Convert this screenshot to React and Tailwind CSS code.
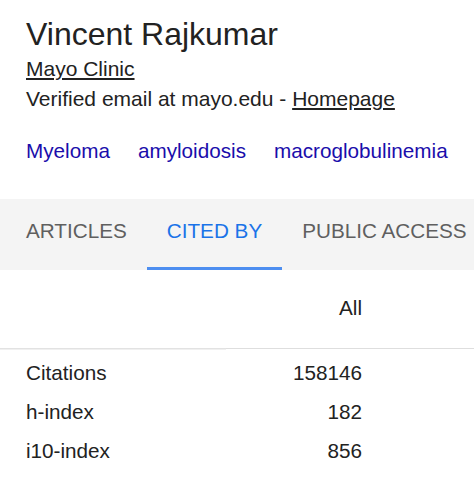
import React from 'react';

const keywords = ['Myeloma', 'amyloidosis', 'macroglobulinemia'];
const tabs = ['ARTICLES', 'CITED BY', 'PUBLIC ACCESS'];
const stats = [
    { label: 'Citations', value: '158146' },
    { label: 'h-index', value: '182' },
    { label: 'i10-index', value: '856' },
];

const App = () => {
    return (
        <div className="w-[474px] h-[500px] overflow-hidden bg-white text-[#222] font-['Liberation_Sans',Arial,sans-serif]">
            <div className="px-[26px] pt-[14px]">
                <h1 className="text-[32px] leading-[40px] font-normal">Vincent Rajkumar</h1>
                <div className="text-[21px] leading-[30px]">
                    <a href="#" className="underline">Mayo Clinic</a>
                </div>
                <div className="text-[21px] leading-[30px]">
                    Verified email at mayo.edu - <a href="#" className="underline">Homepage</a>
                </div>
                <div className="mt-[22px] flex text-[20.7px] leading-[30px] text-[#1a0dab] whitespace-nowrap">
                    {keywords.map((k) => (
                        <a key={k} href="#" className="mr-[28px]">{k}</a>
                    ))}
                </div>
            </div>

            <div className="mt-[33px] flex bg-[#f4f4f4] pl-[6px] whitespace-nowrap overflow-hidden">
                {tabs.map((t) => (
                    <div
                        key={t}
                        className={
                            t === 'CITED BY'
                                ? 'h-[71px] px-5 pt-5 text-[20.7px] leading-6 border-b-[3px] border-[#4d8ef0] text-[#1a73e8]'
                                : 'h-[71px] px-5 pt-5 text-[20.7px] leading-6 border-b-[3px] border-transparent text-[#5f5f5f]'
                        }
                    >
                        {t}
                    </div>
                ))}
            </div>

            <div className="flex pt-[26px] pb-[28px] text-[20.7px] leading-6">
                <div className="w-[226px]"></div>
                <div className="w-[136px] text-right">All</div>
            </div>
            <div className="flex">
                <div className="w-[226px] h-[2px] border-t border-[#e2e2e2] bg-[#f0f0f0]"></div>
                <div className="flex-1 h-[2px] border-t border-[#dedede]"></div>
            </div>
            <div className="pt-[3px] text-[20.7px]">
                {stats.map((s) => (
                    <div key={s.label} className="flex h-[39px] leading-[39px]">
                        <div className="w-[226px] pl-[26px]">{s.label}</div>
                        <div className="w-[136px] text-right">{s.value}</div>
                    </div>
                ))}
            </div>
        </div>
    );
};

export default App;
